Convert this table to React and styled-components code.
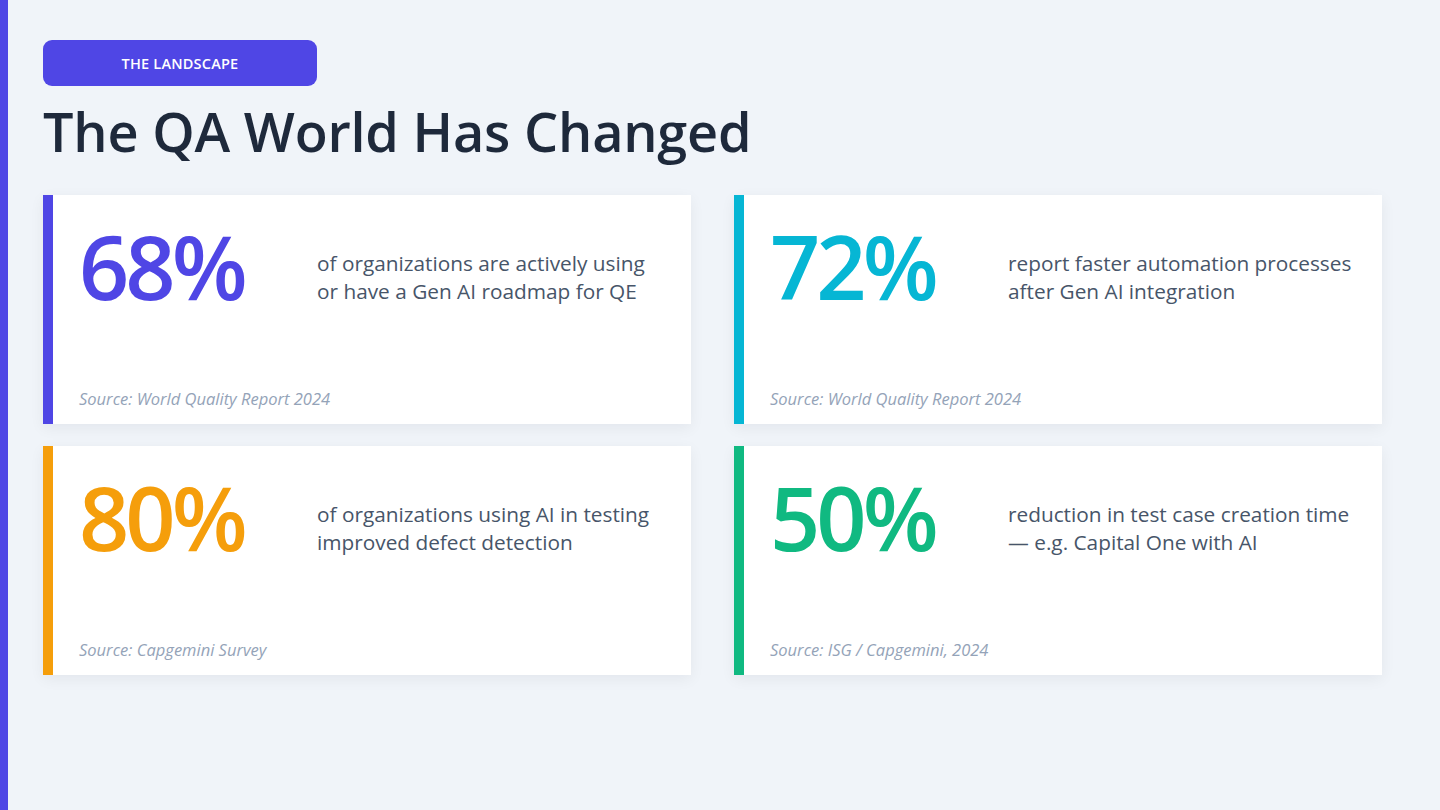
import React from 'react';
import styled, { createGlobalStyle } from 'styled-components';

const GlobalStyle = createGlobalStyle`
  html, body {
    margin: 0;
    padding: 0;
    background: #f0f4f9;
  }
  * {
    box-sizing: border-box;
  }
`;

const Page = styled.div`
  min-height: 100vh;
  background: #f0f4f9;
  border-left: 8px solid #4f46e5;
  padding: 40px 0 0 35px;
  font-family: "Open Sans", "Noto Sans", sans-serif;
`;

const Badge = styled.div`
  width: 274px;
  height: 46px;
  border-radius: 9px;
  background: #4f46e5;
  color: #ffffff;
  font-size: 14.5px;
  font-weight: 600;
  letter-spacing: 0.2px;
  display: flex;
  align-items: center;
  justify-content: center;
`;

const Title = styled.h1`
  margin: 10px 0 0 0;
  font-size: 54px;
  line-height: 70px;
  font-weight: 600;
  color: #1e293b;
  letter-spacing: -0.2px;
`;

const Grid = styled.div`
  margin-top: 29px;
  display: grid;
  grid-template-columns: 648px 648px;
  grid-auto-rows: 229px;
  column-gap: 43px;
  row-gap: 22px;
`;

const Card = styled.div`
  background: #ffffff;
  border-left: 10px solid ${(props) => props.accent};
  box-shadow: 0 4px 14px rgba(15, 23, 42, 0.06);
  display: flex;
  flex-direction: column;
  padding: 27px 20px 14px 26px;
`;

const StatRow = styled.div`
  display: grid;
  grid-template-columns: 238px 1fr;
  align-items: start;
`;

const Number = styled.div`
  font-size: 88px;
  line-height: 1;
  font-weight: 600;
  letter-spacing: -4px;
  color: ${(props) => props.accent};
`;

const Description = styled.p`
  margin: 27px 0 0 0;
  font-size: 20.8px;
  line-height: 28px;
  color: #475569;
`;

const Source = styled.div`
  margin-top: auto;
  font-size: 16.5px;
  font-style: italic;
  color: #94a3b8;
`;

const stats = [
  {
    value: '68%',
    accent: '#4f46e5',
    lines: ['of organizations are actively using', 'or have a Gen AI roadmap for QE'],
    source: 'Source: World Quality Report 2024',
  },
  {
    value: '72%',
    accent: '#06b6d4',
    lines: ['report faster automation processes', 'after Gen AI integration'],
    source: 'Source: World Quality Report 2024',
  },
  {
    value: '80%',
    accent: '#f59e0b',
    lines: ['of organizations using AI in testing', 'improved defect detection'],
    source: 'Source: Capgemini Survey',
  },
  {
    value: '50%',
    accent: '#10b981',
    lines: ['reduction in test case creation time', '— e.g. Capital One with AI'],
    source: 'Source: ISG / Capgemini, 2024',
  },
];

export default function App() {
  return (
    <>
      <GlobalStyle />
      <Page>
        <Badge>THE LANDSCAPE</Badge>
        <Title>The QA World Has Changed</Title>
        <Grid>
          {stats.map((s) => (
            <Card key={s.value} accent={s.accent}>
              <StatRow>
                <Number accent={s.accent}>{s.value}</Number>
                <Description>
                  {s.lines[0]}
                  <br />
                  {s.lines[1]}
                </Description>
              </StatRow>
              <Source>{s.source}</Source>
            </Card>
          ))}
        </Grid>
      </Page>
    </>
  );
}
